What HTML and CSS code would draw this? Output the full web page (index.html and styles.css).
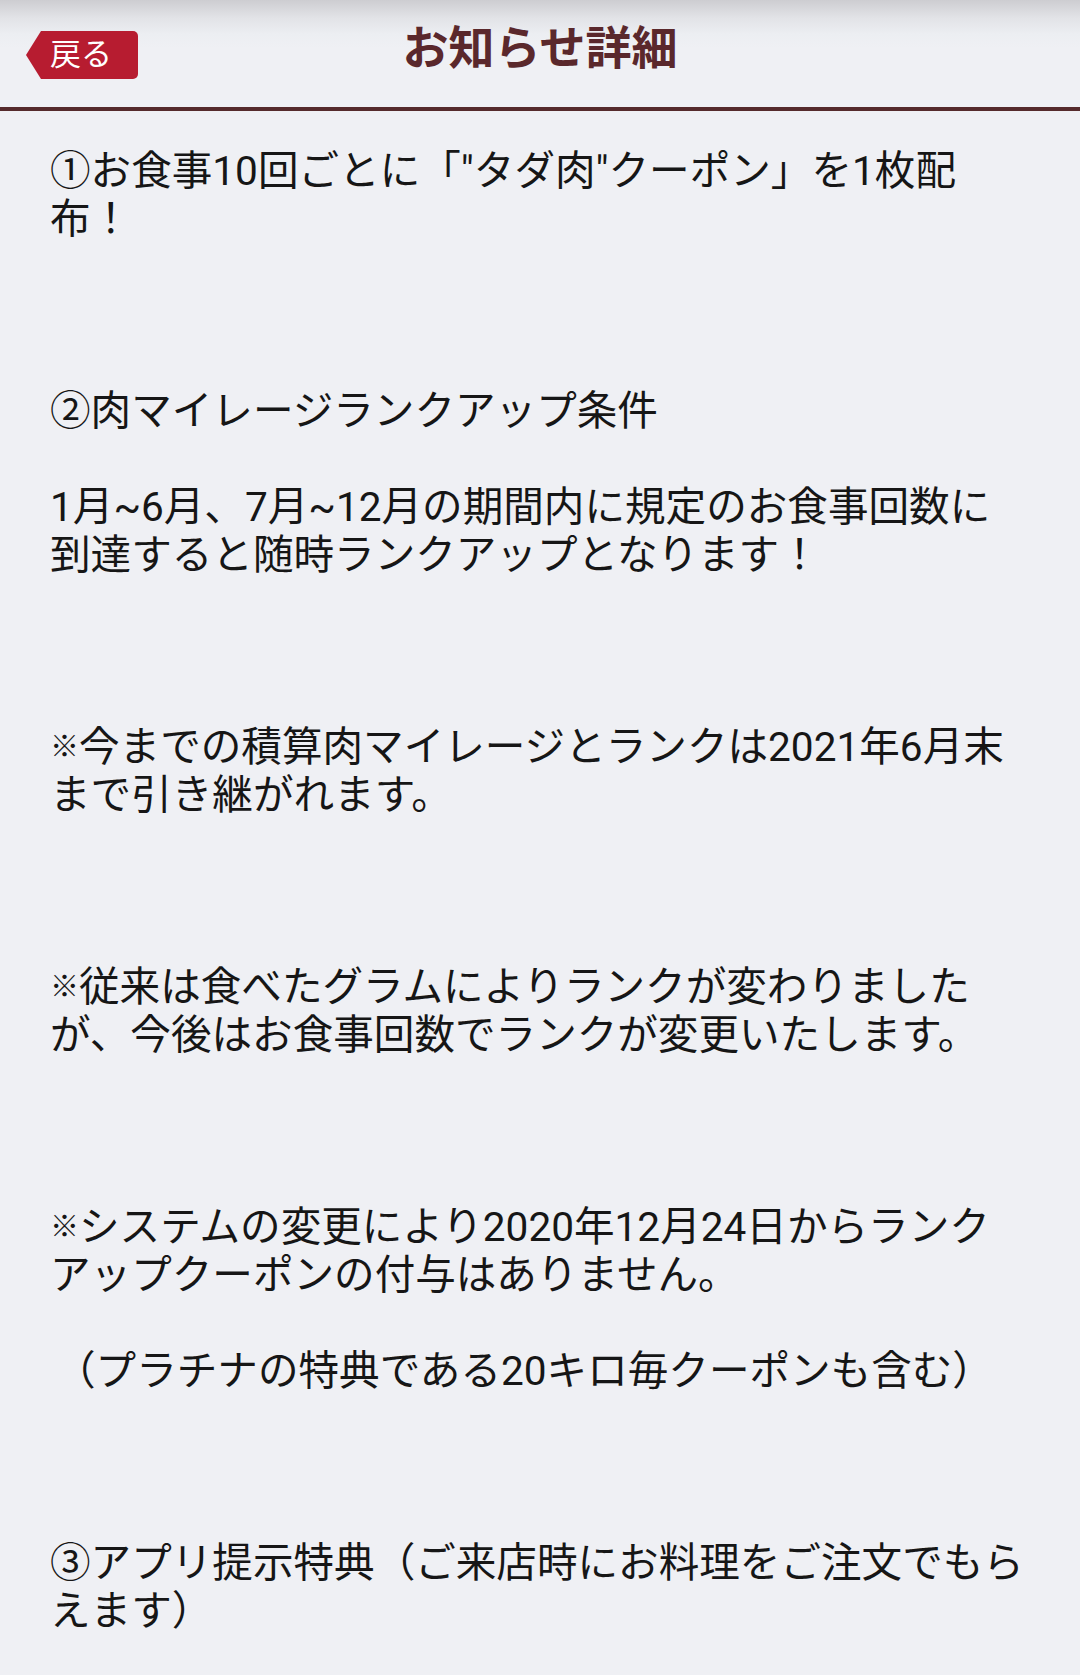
FILE: index.html
```html
<!DOCTYPE html>
<html lang="ja">
<head>
<meta charset="utf-8">
<title>お知らせ詳細</title>
<link rel="stylesheet" href="styles.css">
</head>
<body>
<header class="header">
  <div class="back"><span class="back-label">戻る</span></div>
  <h1 class="title">お知らせ詳細</h1>
  <div class="spacer"></div>
</header>
<main class="content">
<p class="notice">①お食事10回ごとに「"タダ肉"クーポン」を1枚配布！<br><br><br><br>②肉マイレージランクアップ条件<br><br>1月~6月、7月~12月の期間内に規定のお食事回数に到達すると随時ランクアップとなります！<br><br><br><br><span class="mark">※</span>今までの積算肉マイレージとランクは2021年6月末まで引き継がれます。<br><br><br><br><span class="mark">※</span>従来は食べたグラムによりランクが変わりましたが、今後はお食事回数でランクが変更いたします。<br><br><br><br><span class="mark">※</span>システムの変更により2020年12月24日からランクアップクーポンの付与はありません。<br><br><span class="lead"></span>（プラチナの特典である20キロ毎クーポンも含む）<br><br><br><br>③アプリ提示特典（ご来店時にお料理をご注文でもらえます）</p>
</main>
</body>
</html>
```

FILE: styles.css
```css
html, body {
  margin: 0;
  padding: 0;
}

body {
  background: #eff0f4;
  font-family: Roboto, "Noto Sans CJK JP", sans-serif;
  color: #161616;
}

.header {
  height: 107px;
  border-bottom: 4px solid #552a2c;
  background: linear-gradient(to bottom, #cdcdd1 0px, #e2e3e7 18px, #eceef2 34px, #eff0f4 48px);
  display: grid;
  grid-template-columns: 1fr auto 1fr;
}

.back {
  justify-self: start;
  align-self: start;
  margin-top: 31px;
  margin-left: 26px;
  width: 112px;
  height: 48px;
  background: #b71c30;
  border-radius: 0 5px 5px 0;
  clip-path: polygon(15px 0, 100% 0, 100% 100%, 15px 100%, 0 50%);
  display: flex;
  align-items: center;
  padding-left: 24px;
  padding-bottom: 7px;
  box-sizing: border-box;
}

.back-label {
  color: #ffffff;
  font-family: "Noto Sans CJK JP", sans-serif;
  font-size: 31px;
  line-height: 1;
}

.title {
  margin: 14px 0 0 0;
  font-family: "Noto Sans CJK JP", sans-serif;
  font-size: 46px;
  line-height: 60px;
  font-weight: bold;
  color: #5a282c;
  align-self: start;
}

.content {
  padding: 36px 53px 0 50px;
}

.notice {
  margin: 0;
  font-size: 40.6px;
  line-height: 48px;
}

.mark {
  font-family: "Noto Sans CJK JP", sans-serif;
  font-size: 29px;
  font-weight: bold;
  vertical-align: 4px;
  line-height: 1;
}

.lead {
  display: inline-block;
  width: 5px;
}
```
